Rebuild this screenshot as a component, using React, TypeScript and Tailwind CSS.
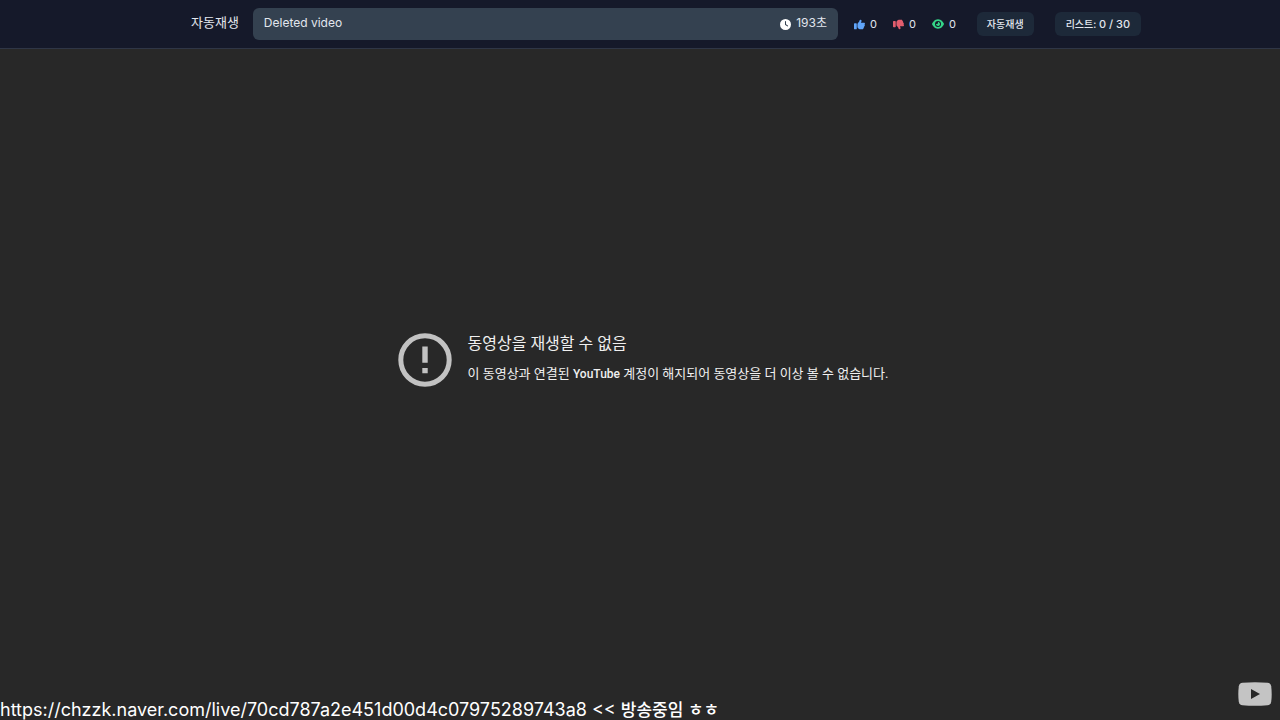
import { FaClock, FaEye, FaThumbsDown, FaThumbsUp } from "react-icons/fa6";

interface Stat {
  label: string;
  value: number;
  icon: typeof FaEye;
  color: string;
}

const stats: Stat[] = [
  { label: "좋아요", value: 0, icon: FaThumbsUp, color: "size-[11px] text-[#60a5fa]" },
  { label: "싫어요", value: 0, icon: FaThumbsDown, color: "size-[11px] text-[#e25d6d]" },
  { label: "조회수", value: 0, icon: FaEye, color: "size-3 text-[#34d587]" },
];

function Header() {
  return (
    <header className="flex h-[49px] items-center border-b border-[#2f3646] bg-[#15192a] pl-[191px] pr-[139px] text-[#e2e6ee]">
      <h1 className="shrink-0 pb-1 text-[13px] leading-5">자동재생</h1>
      <div className="ml-3.5 flex h-8 flex-1 items-center justify-between rounded-md bg-[#344150] px-[11px] pb-0.5 text-xs">
        <span>Deleted video</span>
        <span className="flex items-center gap-[5px]">
          <FaClock className="mt-0.5 size-[11px] text-white" />
          193초
        </span>
      </div>

      {/* Video stats */}
      <ul className="ml-4 flex items-center gap-4 text-[11px]">
        {stats.map(({ label, value, icon: Icon, color }) => (
          <li key={label} aria-label={label} className="flex items-center gap-[5px]">
            <Icon className={color} />
            {value}
          </li>
        ))}
      </ul>

      <button type="button" className="ml-[21px] h-6 shrink-0 rounded-md bg-[#1d2939] px-2.5 text-[10px] font-medium">
        자동재생
      </button>
      <button type="button" className="ml-[21px] h-6 shrink-0 rounded-md bg-[#1d2939] px-[11px] text-[10px] font-medium">
        리스트: <span className="text-[11px]">0 / 30</span>
      </button>
    </header>
  );
}

function PlayerError() {
  return (
    <div className="flex flex-1 items-center justify-center gap-4 pl-1.5 font-['Roboto','Noto_Sans_CJK_KR',sans-serif] text-[#f0f0f0]">
      <svg viewBox="0 0 54 54" className="size-[54px] shrink-0" aria-hidden="true">
        <circle cx="27" cy="27" r="24.2" fill="none" stroke="#c2c2c2" strokeWidth="5" />
        <path d="M24.3 13.5h5.4v16.3h-5.4zM24.3 35h5.4v5.2h-5.4z" fill="#c2c2c2" />
      </svg>
      <div className="pb-1">
        <h2 className="text-base leading-6">동영상을 재생할 수 없음</h2>
        <p className="mt-2 text-[13px] leading-5">
          이 동영상과 연결된 <span className="text-xs font-medium">YouTube</span> 계정이 해지되어 동영상을 더 이상 볼 수 없습니다.
        </p>
      </div>
    </div>
  );
}

export default function App() {
  return (
    <div className="flex min-h-screen flex-col bg-[#282828] font-['Inter','Noto_Sans_CJK_KR',sans-serif]">
      <Header />
      <main className="flex flex-1 flex-col">
        <PlayerError />
        <div className="flex h-[50px] items-end justify-between pr-2">
          <p className="whitespace-nowrap text-lg leading-5 text-white">
            https://chzzk.naver.com/live/70cd787a2e451d00d4c07975289743a8 &lt;&lt;{" "}
            <span className="text-[17px] font-medium">방송중임 ㅎㅎ</span>
          </p>
          <button type="button" aria-label="YouTube" className="mb-3.5">
            <svg viewBox="0 0 34 24" className="h-6 w-[34px]">
              <path
                d="M4.5.7Q17-.3 29.5.7Q32.6 1 33.2 4.2Q34.2 12 33.2 19.8Q32.6 23 29.5 23.3Q17 24.3 4.5 23.3Q1.4 23 .8 19.8Q-.2 12 .8 4.2Q1.4 1 4.5.7Z"
                fill="#c4c4c4"
              />
              <path d="M13 7v10l9-5z" fill="#282828" />
            </svg>
          </button>
        </div>
      </main>
    </div>
  );
}
